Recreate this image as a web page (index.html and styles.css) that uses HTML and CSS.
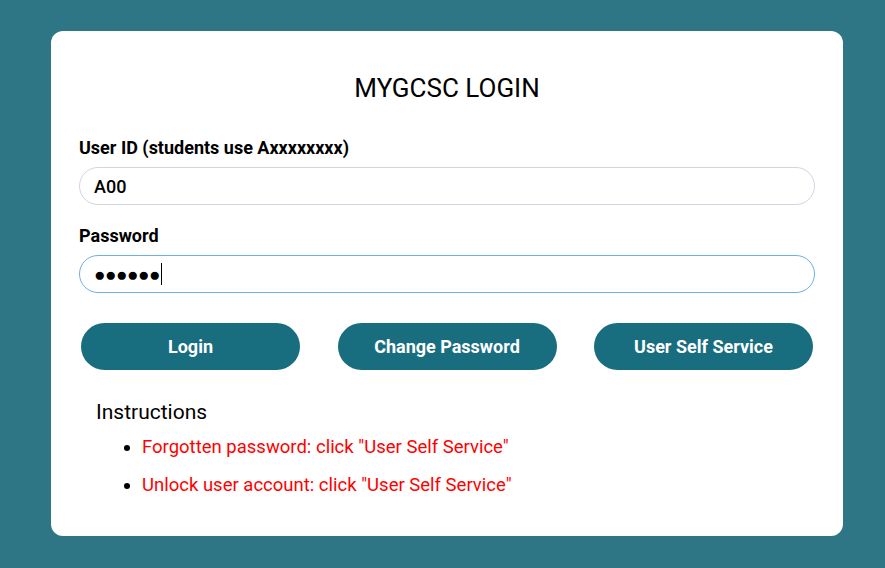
FILE: index.html
```html
<!DOCTYPE html>
<html>
  <head>
    <title>MYGCSC Login</title>
    <meta charset="utf-8">
    <link rel="stylesheet" href="styles.css">
  </head>
  <body>
    <div class="card">
      <h1 class="title">MYGCSC LOGIN</h1>
      <form class="loginform">
        <label class="fieldlabel" for="userid">User ID (students use Axxxxxxxx)</label>
        <input class="field" type="text" id="userid" value="A00">
        <label class="fieldlabel" for="pass">Password</label>
        <div class="field focused"><span class="dots">&#9679;&#9679;&#9679;&#9679;&#9679;&#9679;</span><span class="caret"></span></div>
        <div class="buttons">
          <button type="button" class="btn">Login</button>
          <button type="button" class="btn">Change Password</button>
          <button type="button" class="btn">User Self Service</button>
        </div>
      </form>
      <div class="instructions">
        <h2>Instructions</h2>
        <ul>
          <li><span>Forgotten password: click "User Self Service"</span></li>
          <li><span>Unlock user account: click "User Self Service"</span></li>
        </ul>
      </div>
    </div>
  </body>
</html>
```
FILE: styles.css
```css
body {
  margin: 0;
  padding: 31px 42px 32px 51px;
  background-color: #2e7686;
  font-family: Roboto, "Noto Sans", Arial, sans-serif;
  color: #000;
}
.card {
  background-color: #fff;
  border-radius: 12px;
  padding: 42px 28px 30px 28px;
  height: 433px;
}
.title {
  font-size: 26px;
  font-weight: 400;
  text-align: center;
  margin: 0 0 35px 0;
  line-height: 30px;
}
.loginform {
  display: flex;
  flex-direction: column;
}
.fieldlabel {
  font-size: 18px;
  font-weight: 700;
  line-height: 20px;
  margin-bottom: 9px;
}
.field {
  box-sizing: border-box;
  height: 38px;
  border: 1px solid #cfd6e0;
  border-radius: 19px;
  padding: 0 14px;
  font-family: inherit;
  font-size: 18px;
  font-weight: 500;
  margin-bottom: 21px;
  outline: none;
}
.focused {
  border-color: #6cb0e6;
  display: flex;
  align-items: center;
  margin-bottom: 30px;
}
.dots {
  font-size: 19px;
  letter-spacing: -0.5px;
}
.caret {
  display: inline-block;
  width: 1px;
  height: 22px;
  background-color: #000;
  margin-left: 1px;
}
.buttons {
  display: flex;
  justify-content: space-between;
  padding: 0 2px;
}
.btn {
  width: 219px;
  height: 47px;
  border: none;
  border-radius: 24px;
  background-color: #186d7f;
  color: #fff;
  font-family: inherit;
  font-size: 18px;
  font-weight: 700;
}
.instructions {
  padding-left: 17px;
  margin-top: 30px;
}
.instructions h2 {
  font-size: 21px;
  font-weight: 400;
  margin: 0 0 12px 0;
  line-height: 24px;
}
.instructions ul {
  margin: 0;
  padding-left: 46px;
}
.instructions li {
  font-size: 18.5px;
  line-height: 22px;
  margin-bottom: 16px;
}
.instructions li span {
  color: #f00;
}
```
